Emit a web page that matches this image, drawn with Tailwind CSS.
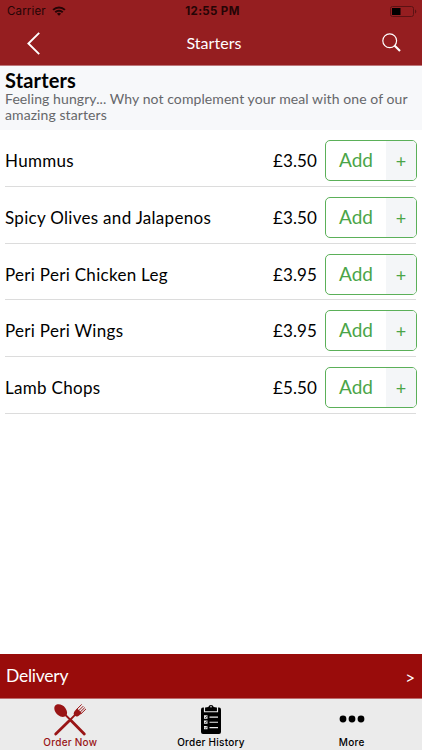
<!DOCTYPE html>
<html lang="en">
<head>
    <meta charset="UTF-8" />
    <title>Starters</title>
    <script src="https://cdn.jsdelivr.net/npm/@tailwindcss/browser@4"></script>
</head>
<body class="bg-white text-black h-[750px] overflow-hidden flex flex-col font-['Lato',sans-serif]">

<header class="h-[65.5px] shrink-0 bg-[#951e20] border-b border-[#bd777a]">
    <!-- Status bar -->
    <div class="h-[22px] grid grid-cols-3 items-center pl-[7px] pr-[5px] text-[11px] leading-[22px] font-['Inter',sans-serif] text-[#250506]">
        <div class="flex items-center gap-[6px]">
            <span class="text-[11.5px] tracking-[0.15px]">Carrier</span>
            <svg class="w-[14px] h-[10px]" viewBox="0 0 15 11" fill="none" stroke="currentColor" stroke-width="2.2">
                <path d="M1 4.3a9.2 9.2 0 0 1 13 0" />
                <path d="M3.4 6.8a5.8 5.8 0 0 1 8.2 0" />
                <path d="M7.5 10.8 5.2 8.5a3.3 3.3 0 0 1 4.6 0z" fill="currentColor" stroke="none" />
            </svg>
        </div>
        <span class="text-center font-bold text-[11.5px] tracking-[0.35px] pl-[1px] whitespace-nowrap">12:55 PM</span>
        <svg class="w-[27px] h-[11px] justify-self-end" viewBox="0 0 27 11">
            <rect x="0.5" y="0.5" width="23" height="10" rx="2" fill="none" stroke="#5c1214" />
            <rect x="2" y="2" width="8.5" height="7" fill="#000" />
            <path d="M25 3.5c1.8.6 1.8 3.4 0 4z" fill="#5c1214" />
        </svg>
    </div>
    <!-- Title bar -->
    <div class="h-[42px] grid grid-cols-3 items-center pl-[27px] pr-[21px] text-white">
        <svg class="w-[13px] h-[23px]" viewBox="0 0 13 23" fill="none" stroke="currentColor" stroke-width="1.9">
            <path d="M12.2.8 1.4 11.5 12.2 22.2" />
        </svg>
        <h1 class="text-center text-[16px] tracking-[0.05px]">Starters</h1>
        <svg class="w-[19px] h-[19px] justify-self-end -mt-[1px]" viewBox="0 0 19 19" fill="none" stroke="currentColor">
            <circle cx="7.7" cy="7.7" r="6.9" stroke-width="1.2" />
            <path d="M12.5 12.5 18 18" stroke-width="2.1" />
        </svg>
    </div>
</header>

<section class="h-[64.5px] shrink-0 bg-[#f7f8fa] px-[5px] pt-[4px]">
    <h2 class="text-[20px] leading-[21px] font-bold tracking-[0.15px]">Starters</h2>
    <p class="text-[14px] leading-[16.5px] text-[#66676a] whitespace-nowrap tracking-[0.085px]">Feeling hungry... Why not complement your meal with one of our<br />amazing starters</p>
</section>

<main id="menu" class="flex-1 px-[5px]"></main>

<div class="h-[45px] shrink-0 flex items-center justify-between bg-[#990c0b] text-white border-b border-[#bd6b6c] pl-[6px] pr-[7px]">
    <span class="text-[17.5px] tracking-[-0.25px] pt-[1px]">Delivery</span>
    <span class="text-[17px] pt-[3px]">&gt;</span>
</div>

<nav class="h-[51px] shrink-0 bg-[#ebebeb] grid grid-cols-3 font-['Inter',sans-serif] text-[10px] leading-[12px] font-medium">
    <a class="flex flex-col items-center text-[#991516]">
        <svg class="w-[34px] h-[34px] mt-[4px] -mb-[1px]" viewBox="0 0 34 34" fill="none" stroke="currentColor" stroke-linecap="round">
            <path d="M2.2 2.6C4.7.2 9.7 1.5 12.3 4.9c2.1 2.8 2.4 6.2.8 7.9-1.8 1.7-5.3 1.500-8.1-.7C1.7 9.6.2 4.9 2.2 2.6z" fill="currentColor" stroke="none" />
            <path d="M12.5 12 18 17.5" stroke-width="1.8" />
            <path d="M18 17.5 31.3 31" stroke-width="2.8" />
            <path d="M22.3 11.7 16 18" stroke-width="1.8" />
            <path d="M16 18 2.7 31" stroke-width="2.8" />
            <path d="M22.2 7.500c-2 2.1-1.9 3.9-.7 5.100s3.1 1.2 5.1-.7l2-2-4.4-4.4z" fill="currentColor" stroke="none" />
            <path d="M23.6 6.5 28.4 1.7M25.3 8.1 30 3.4M26.8 9.5 31.5 4.9M28 10.8 32.7 6.2" stroke-width="1" />
        </svg>
        <span class="tracking-[0.25px]">Order Now</span>
    </a>
    <a class="flex flex-col items-center">
        <svg class="w-[22px] h-[31px] mt-[5px] mb-[1px]" viewBox="0 0 22 30" preserveAspectRatio="none">
            <path d="M3 3.5h16a2 2 0 0 1 2 2V27a2 2 0 0 1-2 2H3a2 2 0 0 1-2-2V5.5a2 2 0 0 1 2-2z" fill="#000" />
            <path d="M4.5 3v4.5h13V3" fill="none" stroke="#ebebeb" stroke-width="1.2" />
            <path d="M5.5 6.5V3.8L8.3 3a2.8 2.8 0 0 1 5.4 0l2.8.8v2.7z" fill="#000" />
            <circle cx="11" cy="2.7" r="0.8" fill="#ebebeb" />
            <path d="M4 11h3.5v3.2H4zM4 16h3.5v3.2H4zM4 21.2h3.5v3.2H4z" fill="#ebebeb" />
            <path d="m4.9 12.500.7.8 1.500-1.8M4.900 17.500l.7.8 1.500-1.8M4.900 22.700l.7.8 1.500-1.8" fill="none" stroke="#000" stroke-width="0.6" />
            <path d="M9.500 12.700H18M9.500 17.700H18M9.500 22.900H18" stroke="#ebebeb" stroke-width="1.1" />
        </svg>
        <span class="tracking-[0.25px]">Order History</span>
    </a>
    <a class="flex flex-col items-center">
        <svg class="w-[26px] h-[8px] mt-[16px] mb-[13px]" viewBox="0 0 26 8">
            <circle cx="4" cy="4" r="3.4" />
            <circle cx="13" cy="4" r="3.4" />
            <circle cx="22" cy="4" r="3.4" />
        </svg>
        <span class="tracking-[0.25px]">More</span>
    </a>
</nav>

<script>
    const items = [
      { name: "Hummus", price: "£3.50" },
      { name: "Spicy Olives and Jalapenos", price: "£3.50" },
      { name: "Peri Peri Chicken Leg", price: "£3.95" },
      { name: "Peri Peri Wings", price: "£3.95" },
      { name: "Lamb Chops", price: "£5.50" },
    ];

    document.getElementById("menu").innerHTML = items.map(item => `
      <div class="h-[56.75px] mr-[1px] flex items-start border-b border-[#dcdcdc]">
        <span class="flex-1 text-[17px] leading-[61px] tracking-[0.3px]">${item.name}</span>
        <span class="text-[17px] leading-[61px] tracking-[0.1px]">${item.price}</span>
        <button class="mt-[10px] ml-[8px] -mr-[1px] w-[92px] h-[41px] flex rounded-[5px] border border-[#5bb059] overflow-hidden text-[#4aa548]">
          <span class="flex-1 text-center text-[19px] leading-[38px]">Add</span>
          <span class="w-[30px] bg-[#f4f6f8] text-center text-[18px] leading-[41px]">+</span>
        </button>
      </div>
    `).join("");
</script>
</body>
</html>
